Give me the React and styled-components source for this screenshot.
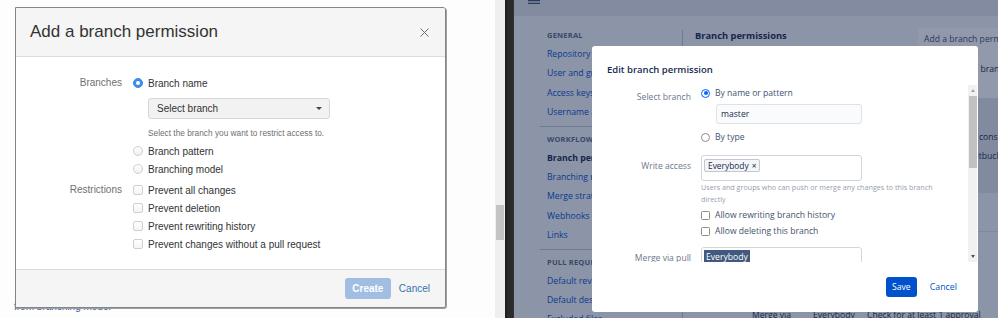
import React from 'react';
import styled, { createGlobalStyle } from 'styled-components';

const GlobalStyle = createGlobalStyle`
  html, body {
    margin: 0;
    padding: 0;
    background: #fff;
  }
  body {
    width: 998px;
    height: 318px;
    overflow: hidden;
  }
  * {
    box-sizing: border-box;
  }
`;

const Frame = styled.div`
  display: flex;
  width: 998px;
  height: 318px;
  overflow: hidden;
`;

/* ---------- left screenshot (AUI dialog) ---------- */

const LeftShot = styled.div`
  position: relative;
  width: 495px;
  flex: none;
  background: #fdfdfd;
  padding: 301px 0 0 14px;
`;

const BehindLink = styled.div`
  font: 10px/12px 'Liberation Sans', Arial, sans-serif;
  color: #2d5f9a;
`;

const AuiDialog = styled.div`
  position: absolute;
  left: 15px;
  top: 7px;
  width: 431px;
  height: 301px;
  display: flex;
  flex-direction: column;
  background: #fff;
  border: 1px solid #858585;
  border-radius: 0 3px 3px 0;
  box-shadow: 1px 1px 0 #a0a0a0;
  font-family: 'Liberation Sans', Arial, sans-serif;
  overflow: hidden;
`;

const AuiHeader = styled.div`
  height: 49px;
  flex: none;
  display: flex;
  align-items: center;
  justify-content: space-between;
  padding: 0 16px 0 14px;
  background: #f5f5f5;
  border-bottom: 1px solid #dcdcdc;
`;

const AuiTitle = styled.h2`
  margin: 0;
  font-size: 17px;
  font-weight: normal;
  color: #333;
`;

const AuiBody = styled.div`
  flex: 1;
  display: grid;
  grid-template-columns: 106px 1fr;
  column-gap: 11px;
  row-gap: 3px;
  align-content: start;
  padding-top: 17px;
`;

const AuiLabel = styled.div`
  text-align: right;
  font-size: 10px;
  line-height: 18px;
  color: #707070;
`;

const AuiColumn = styled.div`
  display: flex;
  flex-direction: column;
`;

const AuiOption = styled.label`
  display: flex;
  align-items: center;
  gap: 5px;
  height: 18px;
  margin-top: ${p => p.$gap || 0}px;
  font-size: 10px;
  color: #333;
`;

const AuiRadio = styled.span`
  position: relative;
  width: 10px;
  height: 10px;
  border-radius: 50%;
  flex: none;
  border: 1px solid ${p => (p.$checked ? '#3b8ced' : '#cfcfcf')};
  background: ${p => (p.$checked ? '#3b8ced' : 'linear-gradient(#fff, #f0f0f0)')};
  &::after {
    content: '';
    display: ${p => (p.$checked ? 'block' : 'none')};
    position: absolute;
    left: 2px;
    top: 2px;
    width: 4px;
    height: 4px;
    border-radius: 50%;
    background: #fff;
  }
`;

const AuiCheck = styled.span`
  width: 10px;
  height: 10px;
  flex: none;
  border: 1px solid #cfcfcf;
  border-radius: 2px;
  background: linear-gradient(#fff, #f4f4f4);
`;

const AuiSelect = styled.div`
  display: flex;
  align-items: center;
  justify-content: space-between;
  width: 182px;
  height: 21px;
  margin: 6px 0 0 15px;
  padding: 0 7px 0 8px;
  background: #f2f2f2;
  border: 1px solid #d6d6d6;
  border-radius: 3px;
  font-size: 10px;
  color: #333;
`;

const Caret = styled.span`
  width: 0;
  height: 0;
  border-left: 3px solid transparent;
  border-right: 3px solid transparent;
  border-top: 3px solid #444;
`;

const AuiHelp = styled.div`
  margin: 8px 0 0 15px;
  font-size: 8.3px;
  line-height: 12px;
  color: #707070;
`;

const AuiFooter = styled.div`
  height: 38px;
  flex: none;
  display: flex;
  align-items: center;
  justify-content: flex-end;
  gap: 8px;
  padding-right: 15px;
  background: #f5f5f5;
  border-top: 1px solid #dcdcdc;
`;

const AuiPrimary = styled.button`
  width: 46px;
  height: 21px;
  padding: 0;
  border: none;
  border-radius: 3px;
  background: #a1bee2;
  color: #fff;
  font: bold 10px 'Liberation Sans', Arial, sans-serif;
`;

const AuiLink = styled.span`
  font-size: 10px;
  color: #3572b0;
`;

/* ---------- middle strips ---------- */

const Gutter = styled.div`
  width: 10px;
  flex: none;
  display: flex;
  justify-content: center;
  padding-top: 205px;
  background: #efefef;
`;

const GutterThumb = styled.div`
  width: 8px;
  height: 35px;
  background: #c4c4c4;
`;

const DarkEdge = styled.div`
  width: 9px;
  flex: none;
  background: #2a2a2a;
  border-left: 2px solid #1f1f1f;
  border-right: 1px solid #333;
`;

/* ---------- right screenshot (Bitbucket settings + modal) ---------- */

const RightShot = styled.div`
  position: relative;
  flex: 1;
  display: flex;
  flex-direction: column;
  overflow: hidden;
  background: #f4f5f7;
  font-family: 'Open Sans', 'Noto Sans', sans-serif;
  color: #172b4d;
`;

const TopBar = styled.div`
  height: 16px;
  flex: none;
  padding-left: 14px;
  background: #e3e5ea;
`;

const PageBody = styled.div`
  flex: 1;
  display: flex;
`;

const Sidebar = styled.nav`
  width: 168px;
  flex: none;
  padding: 10px 0 0 26px;
`;

const SectionTitle = styled.div`
  height: 19px;
  line-height: 19px;
  padding-left: 7px;
  font-size: 7.5px;
  font-weight: 700;
  letter-spacing: 0.2px;
  color: #5e6c84;
  text-transform: uppercase;
`;

const NavItem = styled.div`
  height: 19.4px;
  line-height: 19.4px;
  padding-left: 7px;
  font-size: 8.7px;
  white-space: nowrap;
  font-weight: ${p => (p.$active ? 700 : 400)};
  color: ${p => (p.$active ? '#172b4d' : '#0052cc')};
`;

const NavDivider = styled.hr`
  height: 1px;
  margin: 3px 16px 3px 0;
  border: none;
  background: #c1c7d0;
`;

const Main = styled.main`
  flex: 1;
  display: grid;
  grid-template-columns: 223px 1fr;
  grid-template-rows: 279px auto;
  margin-top: 14px;
  padding-left: 12px;
  border-left: 1px solid #c1c7d0;
`;

const PageHeading = styled.h1`
  margin: 0;
  font-size: 9.3px;
  line-height: 12px;
  font-weight: 700;
  color: #172b4d;
`;

const Aside = styled.aside`
  display: flex;
  flex-direction: column;
  white-space: nowrap;
  font-size: 8.6px;
`;

const AsidePanel = styled.div`
  height: 70px;
  margin-top: -2px;
  background: #fff;
`;

const AsideButton = styled.div`
  height: 22px;
  line-height: 22px;
  padding-left: 6px;
  color: #42526e;
`;

const AsideNote = styled.div`
  padding: 13px 0 0 58px;
  line-height: 12px;
`;

const InfoBox = styled.div`
  height: 95px;
  padding: 30px 0 0 61px;
  background: #e1e4e9;
  line-height: 19px;
`;

const InfoLine = styled.div`
  margin-left: ${p => p.$shift || 0}px;
`;

const AsideRule = styled.div`
  height: 1px;
  margin-top: 38px;
  background: #dfe1e6;
`;

const TableRow = styled.div`
  grid-column: 1 / 3;
  display: grid;
  grid-template-columns: 61px 54px auto;
  padding-left: 57px;
  font-size: 8.6px;
  line-height: 12px;
  white-space: nowrap;
`;

const Blanket = styled.div`
  position: absolute;
  inset: 0;
  background: rgba(18, 32, 72, 0.46);
`;

const Modal = styled.div`
  position: absolute;
  left: 78px;
  top: 46px;
  width: 386px;
  height: 266px;
  display: flex;
  flex-direction: column;
  background: #fff;
  border-radius: 3px;
`;

const ModalHeader = styled.div`
  height: 39px;
  flex: none;
  display: flex;
  align-items: center;
  padding: 8px 0 0 15px;
  font-size: 9.5px;
  font-weight: 600;
  color: #172b4d;
`;

const ScrollArea = styled.div`
  height: 177px;
  flex: none;
  display: flex;
  overflow: hidden;
`;

const ScrollContent = styled.div`
  flex: 1;
  padding: 1px 0 0 15px;
`;

const FieldRow = styled.div`
  display: grid;
  grid-template-columns: 84px 1fr;
  column-gap: 10px;
  margin-top: ${p => p.$space || 0}px;
`;

const FieldLabel = styled.div`
  padding-top: 4px;
  text-align: right;
  font-size: 8.6px;
  line-height: 14px;
  color: #6b778c;
`;

const FieldControls = styled.div`
  display: flex;
  flex-direction: column;
`;

const Choice = styled.label`
  display: flex;
  align-items: center;
  gap: 5px;
  height: ${p => p.$h || 14}px;
  margin-top: ${p => p.$gap || 0}px;
  font-size: 8.6px;
  color: #42526e;
  white-space: nowrap;
`;

const Radio = styled.span`
  position: relative;
  width: 9px;
  height: 9px;
  flex: none;
  border-radius: 50%;
  border: 1px solid ${p => (p.$checked ? '#0065ff' : '#8c8c8c')};
  background: #fff;
  &::after {
    content: '';
    display: ${p => (p.$checked ? 'block' : 'none')};
    position: absolute;
    left: 1.5px;
    top: 1.5px;
    width: 4px;
    height: 4px;
    border-radius: 50%;
    background: #0065ff;
  }
`;

const Check = styled.span`
  width: 9px;
  height: 9px;
  flex: none;
  border: 1px solid #8c8c8c;
  border-radius: 1.5px;
  background: #fff;
`;

const TextInput = styled.div`
  width: 146px;
  height: 20px;
  margin: 4px 0 0 15px;
  padding-left: 4px;
  line-height: 18px;
  border: 1px solid #dfe1e6;
  border-radius: 3px;
  background: #fafbfc;
  font-size: 8.6px;
  color: #172b4d;
`;

const PickerBox = styled.div`
  display: flex;
  align-items: flex-start;
  width: 161px;
  height: ${p => p.$h}px;
  flex: none;
  padding: ${p => p.$pad};
  border: 1px solid #d3d6dc;
  border-radius: 3px;
  background: #fff;
`;

const Tag = styled.span`
  display: inline-flex;
  align-items: center;
  gap: 3px;
  height: 13px;
  padding: 0 3px;
  border: 1px solid #c1c7d0;
  border-radius: 2px;
  background: #f4f5f7;
  font-size: 8.4px;
  color: #172b4d;
`;

const Highlight = styled.span`
  display: block;
  height: 14px;
  padding: 0 2px;
  line-height: 14px;
  background: #41597f;
  color: #fff;
  font-size: 8.6px;
`;

const Help = styled.div`
  width: 250px;
  font-size: 7.2px;
  line-height: 12px;
  color: #97a0af;
`;

const ScrollTrack = styled.div`
  width: 9px;
  flex: none;
  margin-right: 1px;
  display: flex;
  flex-direction: column;
  align-items: center;
  background: #f1f1f1;
`;

const Arrow = styled.span`
  width: 0;
  height: 0;
  margin: ${p => (p.$up ? '4px 0 4px' : 'auto 0 4px')};
  border-left: 2.5px solid transparent;
  border-right: 2.5px solid transparent;
  ${p =>
    p.$up
      ? 'border-bottom: 3px solid #a3a3a3;'
      : 'border-top: 3px solid #505050;'}
`;

const ScrollThumb = styled.div`
  width: 8px;
  height: 72px;
  background: #c1c1c1;
`;

const ModalFooter = styled.div`
  flex: 1;
  display: flex;
  align-items: center;
  justify-content: flex-end;
  gap: 13px;
  padding-right: 21px;
`;

const SaveButton = styled.button`
  width: 31px;
  height: 20px;
  padding: 0;
  border: none;
  border-radius: 3px;
  background: #0052cc;
  color: #fff;
  font: 500 8.6px 'Open Sans', 'Noto Sans', sans-serif;
`;

const CancelLink = styled.span`
  font-size: 8.8px;
  color: #0052cc;
`;

const CloseIcon = () => (
  <svg width="9" height="9" viewBox="0 0 9 9">
    <path d="M0.5 0.5 L8.5 8.5 M8.5 0.5 L0.5 8.5" stroke="#707070" strokeWidth="1" />
  </svg>
);

const Hamburger = () => (
  <svg width="12" height="5" viewBox="0 0 12 5" style={{ display: 'block' }}>
    <path d="M0 0.6 H12 M0 3.4 H12" stroke="#42526e" strokeWidth="1.1" />
  </svg>
);

const sidebar = [
  { title: 'General', items: ['Repository details', 'User and group access', 'Access keys', 'Username aliases'] },
  { title: 'Workflow', items: ['Branch permissions', 'Branching model', 'Merge strategies', 'Webhooks', 'Links'] },
  { title: 'Pull requests', items: ['Default reviewers', 'Default description', 'Excluded files'] },
];

export default function App() {
  return (
    <Frame>
      <GlobalStyle />
      <LeftShot>
        <BehindLink>from branching model</BehindLink>
        <AuiDialog>
          <AuiHeader>
            <AuiTitle>Add a branch permission</AuiTitle>
            <CloseIcon />
          </AuiHeader>
          <AuiBody>
            <AuiLabel>Branches</AuiLabel>
            <AuiColumn>
              <AuiOption>
                <AuiRadio $checked />
                Branch name
              </AuiOption>
              <AuiSelect>
                Select branch
                <Caret />
              </AuiSelect>
              <AuiHelp>Select the branch you want to restrict access to.</AuiHelp>
              <AuiOption $gap={3}>
                <AuiRadio />
                Branch pattern
              </AuiOption>
              <AuiOption>
                <AuiRadio />
                Branching model
              </AuiOption>
            </AuiColumn>
            <AuiLabel>Restrictions</AuiLabel>
            <AuiColumn>
              {['Prevent all changes', 'Prevent deletion', 'Prevent rewriting history', 'Prevent changes without a pull request'].map(t => (
                <AuiOption key={t}>
                  <AuiCheck />
                  {t}
                </AuiOption>
              ))}
            </AuiColumn>
          </AuiBody>
          <AuiFooter>
            <AuiPrimary>Create</AuiPrimary>
            <AuiLink>Cancel</AuiLink>
          </AuiFooter>
        </AuiDialog>
      </LeftShot>

      <Gutter>
        <GutterThumb />
      </Gutter>
      <DarkEdge />

      <RightShot>
        <TopBar>
          <Hamburger />
        </TopBar>
        <PageBody>
          <Sidebar>
            {sidebar.map((group, i) => (
              <React.Fragment key={group.title}>
                {i > 0 && <NavDivider />}
                <SectionTitle>{group.title}</SectionTitle>
                {group.items.map(item => (
                  <NavItem key={item} $active={item === 'Branch permissions'}>
                    {item}
                  </NavItem>
                ))}
              </React.Fragment>
            ))}
          </Sidebar>
          <Main>
            <PageHeading>Branch permissions</PageHeading>
            <Aside>
              <AsidePanel>
                <AsideButton>Add a branch permission</AsideButton>
                <AsideNote>: branch</AsideNote>
              </AsidePanel>
              <InfoBox>
                <InfoLine>consider</InfoLine>
                <InfoLine $shift={-8}>Bitbucket</InfoLine>
              </InfoBox>
              <AsideRule />
            </Aside>
            <TableRow>
              <span>Merge via</span>
              <span>Everybody</span>
              <span>Check for at least 1 approval</span>
            </TableRow>
          </Main>
        </PageBody>

        <Blanket />

        <Modal>
          <ModalHeader>Edit branch permission</ModalHeader>
          <ScrollArea>
            <ScrollContent>
              <FieldRow>
                <FieldLabel>Select branch</FieldLabel>
                <FieldControls>
                  <Choice>
                    <Radio $checked />
                    By name or pattern
                  </Choice>
                  <TextInput>master</TextInput>
                  <Choice $gap={6}>
                    <Radio />
                    By type
                  </Choice>
                </FieldControls>
              </FieldRow>
              <FieldRow $space={11}>
                <FieldLabel>Write access</FieldLabel>
                <FieldControls>
                  <PickerBox $h={26} $pad="3px 0 0 2px">
                    <Tag>
                      Everybody <span>×</span>
                    </Tag>
                  </PickerBox>
                  <Help>
                    Users and groups who can push or merge any changes to this branch
                    <br />
                    directly
                  </Help>
                  <Choice $h={16} $gap={2}>
                    <Check />
                    Allow rewriting branch history
                  </Choice>
                  <Choice $h={16}>
                    <Check />
                    Allow deleting this branch
                  </Choice>
                </FieldControls>
              </FieldRow>
              <FieldRow $space={8}>
                <FieldLabel>Merge via pull</FieldLabel>
                <FieldControls>
                  <PickerBox $h={26} $pad="2px 0 0 2px">
                    <Highlight>Everybody</Highlight>
                  </PickerBox>
                </FieldControls>
              </FieldRow>
            </ScrollContent>
            <ScrollTrack>
              <Arrow $up />
              <ScrollThumb />
              <Arrow />
            </ScrollTrack>
          </ScrollArea>
          <ModalFooter>
            <SaveButton>Save</SaveButton>
            <CancelLink>Cancel</CancelLink>
          </ModalFooter>
        </Modal>
      </RightShot>
    </Frame>
  );
}
